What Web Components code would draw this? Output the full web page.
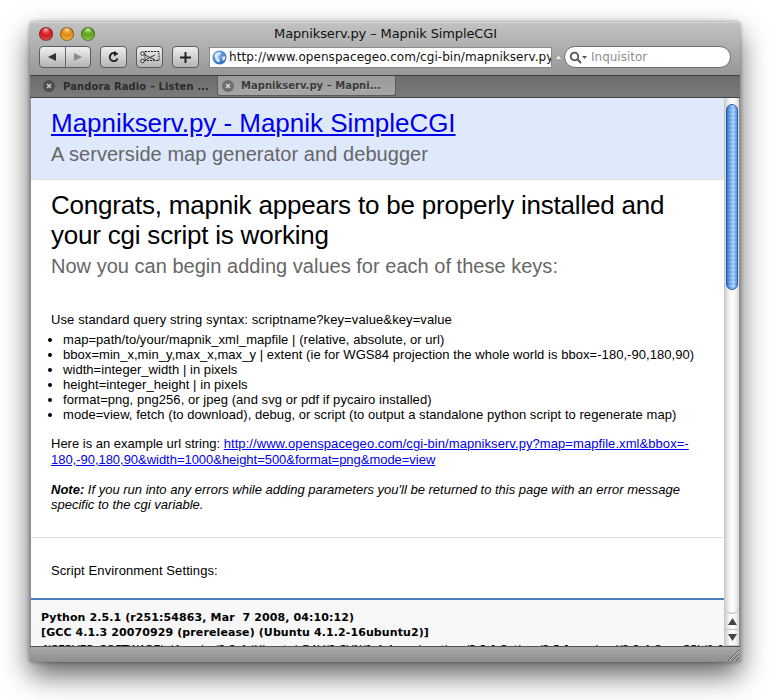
<!DOCTYPE html>
<html>
<head>
<meta charset="utf-8">
<title>Mapnikserv.py - Mapnik SimpleCGI</title>
<style>
    html, body { margin: 0; padding: 0; background: #fff; height: 700px; overflow: hidden; }
</style>
</head>
<body>
<browser-window>
    <browser-toolbar slot="chrome"></browser-toolbar>
    <tab-strip slot="chrome"></tab-strip>
    <map-page></map-page>
</browser-window>

<script>
class BrowserWindow extends HTMLElement {
    constructor() {
        super();
        this.attachShadow({mode: 'open'});
        this.shadowRoot.innerHTML = `
            <style>
                :host { display: block; padding: 22px 0 0 30px; }
                .window {
                    width: 710px;
                    height: 640px;
                    display: flex;
                    flex-direction: column;
                    border-radius: 4px 4px 0 0;
                    overflow: hidden;
                    box-shadow: 0 13px 28px rgba(0,0,0,.62), 0 0 4px rgba(0,0,0,.4);
                    background: #979797;
                }
                .body { flex: 1; min-height: 0; display: flex; padding: 0 1px; border-top: 1px solid #3f3f3f; background: #8e8e8e; }
                .foot {
                    height: 15px;
                    flex: none;
                    display: flex;
                    justify-content: flex-end;
                    border-top: 1px solid #555;
                    background: linear-gradient(#a8a8a8, #8e8e8e);
                }
                .grip { width: 15px; height: 15px; }
            </style>
            <div class="window">
                <slot name="chrome"></slot>
                <div class="body"><slot></slot></div>
                <div class="foot">
                    <svg class="grip" viewBox="0 0 15 15">
                        <path d="M3 14L14 3M7 14L14 7M11 14L14 11" stroke="#555" fill="none"/>
                        <path d="M4 14L14 4M8 14L14 8M12 14L14 12" stroke="#c4c4c4" fill="none"/>
                    </svg>
                </div>
            </div>
        `;
    }
}

class BrowserToolbar extends HTMLElement {
    constructor() {
        super();
        this.attachShadow({mode: 'open'});
        this.shadowRoot.innerHTML = `
            <style>
                :host {
                    display: block;
                    height: 54px;
                    box-sizing: border-box;
                    background: linear-gradient(#c2c2c2, #979797);
                    border-top: 1px solid #d8d8d8;
                    border-bottom: 1px solid #3f3f3f;
                }
                .title-row { height: 21px; display: flex; align-items: center; position: relative; padding-left: 9px; gap: 7px; }
                .title {
                    position: absolute; left: 1px; right: 0; top: 2px; text-align: center;
                    font: 13px/18px "DejaVu Sans", sans-serif; letter-spacing: -.12px; color: #111;
                }
                .light { width: 14px; height: 14px; border-radius: 50%; box-sizing: border-box; border: 1px solid rgba(0,0,0,.4); }
                .red { background: radial-gradient(circle at 50% 15%, #f7c4c4 0, #e8484c 22%, #d0181e 50%, #f06058 100%); }
                .yellow { background: radial-gradient(circle at 50% 15%, #fbe0b0 0, #eea030 25%, #e08a12 50%, #fbc860 100%); }
                .green { background: radial-gradient(circle at 50% 15%, #d0eeb0 0, #7cb83c 25%, #5ea020 50%, #a8dc60 100%); }
                .tools { height: 24px; margin-top: 1px; display: flex; align-items: center; padding-left: 9px; }
                .btn {
                    height: 22px; box-sizing: border-box; border: 1px solid #5c5c5c; border-radius: 4px;
                    background: linear-gradient(#f0f0f0, #b4b4b4); display: flex; align-items: center; justify-content: center;
                }
                .btn svg { display: block; }
                .seg { width: 52px; display: flex; margin-right: 9px; padding: 0; }
                .seg span { flex: 1; height: 100%; display: flex; align-items: center; justify-content: center; }
                .seg span + span { border-left: 1px solid #666; }
                .one { width: 27px; margin-right: 9px; }
                .url {
                    width: 343px; height: 21px; box-sizing: border-box; background: #fff;
                    margin-left: 1px; display: flex; align-items: center; overflow: hidden; padding-left: 2px; gap: 2px;
                    font: 12px/18px "DejaVu Sans", sans-serif; letter-spacing: .05px; color: #111; white-space: nowrap; border: 1px solid #8a8a8a;
                }
                .url svg { flex: none; }
                .mark { width: 12px; display: flex; justify-content: center; }
                .search {
                    width: 167px; height: 22px; box-sizing: border-box; background: #fff; border: 1px solid #6d6d6d; border-radius: 11px;
                    display: flex; align-items: center; padding-left: 4px; gap: 3px;
                    font: 12px "DejaVu Sans", sans-serif; color: #8e8e8e;
                }
            </style>
            <div class="title-row">
                <span class="light red"></span><span class="light yellow"></span><span class="light green"></span>
                <span class="title">Mapnikserv.py – Mapnik SimpleCGI</span>
            </div>
            <div class="tools">
                <div class="btn seg">
                    <span><svg width="10" height="10" viewBox="0 0 10 10"><path d="M9 1V9L1 5Z" fill="#333"/></svg></span>
                    <span><svg width="10" height="10" viewBox="0 0 10 10"><path d="M1 1V9L9 5Z" fill="#8c8c8c"/></svg></span>
                </div>
                <div class="btn one">
                    <svg width="12" height="12" viewBox="0 0 12 12"><path d="M9.500 7.500A4 4 0 1 1 7 2.300" fill="none" stroke="#222" stroke-width="2"/><path d="M6 0L10.500 2.700L6 5.500Z" fill="#222"/></svg>
                </div>
                <div class="btn one">
                    <svg width="20" height="14" viewBox="0 0 20 14">
                        <rect x="5" y="1.500" width="14" height="9" fill="none" stroke="#222" stroke-dasharray="2 1"/>
                        <path d="M3 4L15 10M3 11L15 5" stroke="#333" fill="none"/>
                        <circle cx="2.500" cy="3.500" r="1.800" fill="#ddd" stroke="#333"/><circle cx="2.500" cy="11" r="1.800" fill="#ddd" stroke="#333"/>
                    </svg>
                </div>
                <div class="btn one">
                    <svg width="11" height="11" viewBox="0 0 11 11"><path d="M5.500 0V11M0 5.500H11" stroke="#222" stroke-width="2"/></svg>
                </div>
                <div class="url">
                    <svg width="15" height="15" viewBox="0 0 15 15">
                        <defs><radialGradient id="globe" cx=".4" cy=".35" r=".75"><stop offset="0" stop-color="#8fc0f4"/><stop offset="1" stop-color="#1c5cb8"/></radialGradient></defs>
                        <circle cx="7.500" cy="7.500" r="7" fill="url(#globe)"/>
                        <path d="M3 4C5 2 8 1.500 9 3C9 5 6 5 6 7C6 9 8 9 8 11C7 13 5 12 4 10C3 8 2 6 3 4ZM10 7L13 6C14 8 13 10 11 11Z" fill="#dce8f6"/>
                    </svg>
                    <span>http://www.openspacegeo.com/cgi-bin/mapnikserv.py</span>
                </div>
                <div class="mark"><svg width="5" height="5" viewBox="0 0 5 5"><path d="M2.500 0.500L5 4H0Z" fill="#eee"/></svg></div>
                <div class="search">
                    <svg width="19" height="13" viewBox="0 0 19 13">
                        <circle cx="5.500" cy="5.500" r="3.800" fill="none" stroke="#555" stroke-width="1.800"/>
                        <path d="M8.500 8.500L12 12" stroke="#555" stroke-width="2"/>
                        <path d="M13 5H18L15.500 8Z" fill="#555"/>
                    </svg>
                    <span>Inquisitor</span>
                </div>
            </div>
        `;
    }
}

class TabStrip extends HTMLElement {
    constructor() {
        super();
        this.attachShadow({mode: 'open'});
        this.shadowRoot.innerHTML = `
            <style>
                :host {
                    display: flex;
                    height: 21px;
                    background: linear-gradient(#6c6c6c, #7b7b7b);
                    font: bold 10px "DejaVu Sans", sans-serif;
                    letter-spacing: .1px;
                    color: #2b2b2b;
                }
                .tab {
                    box-sizing: border-box;
                    display: flex; align-items: center; gap: 8px; padding-left: 13px;
                    white-space: nowrap; overflow: hidden; height: 20px;
                }
                .tab.first { width: 187px; }
                .tab.active {
                    width: 179px; padding-left: 4px; gap: 7px; color: #3a3a3a; letter-spacing: .02px;
                    background: linear-gradient(#9a9a9a, #a6a6a6);
                    border: 1px solid #5a5a5a; border-top: 0; border-radius: 0 0 3px 3px;
                    text-shadow: 0 1px 0 rgba(255,255,255,.25);
                }
                .x { width: 12px; height: 12px; flex: none; }
            </style>
            <div class="tab first">
                <svg class="x" viewBox="0 0 12 12"><circle cx="6" cy="6" r="6" fill="#4f4f4f"/><path d="M4 4L8 8M8 4L4 8" stroke="#c9c9c9" stroke-width="1.500"/></svg>
                <span>Pandora Radio – Listen ...</span>
            </div>
            <div class="tab active">
                <svg class="x" viewBox="0 0 12 12"><circle cx="6" cy="6" r="6" fill="#6e6e6e"/><path d="M4 4L8 8M8 4L4 8" stroke="#d6d6d6" stroke-width="1.500"/></svg>
                <span>Mapnikserv.py – Mapni...</span>
            </div>
        `;
    }
}

class MapPage extends HTMLElement {
    constructor() {
        super();
        this.attachShadow({mode: 'open'});
        this.shadowRoot.innerHTML = `
            <style>
                :host { display: flex; flex: 1; min-width: 0; background: #fff; font: 13px/15px "Liberation Sans", Arial, sans-serif; color: #000; overflow: hidden; }
                .main { flex: 1; min-width: 0; display: flex; flex-direction: column; }
                header { height: 82px; flex: none; box-sizing: border-box; padding: 9px 20px 0; background: #dfe9fc; border-bottom: 1px solid #d8dde8; }
                h1 { margin: 0; font-size: 26px; line-height: 33px; font-weight: normal; letter-spacing: -.03px; }
                a { color: #0000ee; text-decoration: underline; }
                .sub { margin-top: 1px; font-size: 20px; line-height: 26px; color: #666; letter-spacing: .06px; }
                .content { height: 358px; flex: none; box-sizing: border-box; padding: 10px 20px 0; border-bottom: 1px solid #ddd; }
                h2 { margin: 0; font-size: 26px; line-height: 30px; font-weight: normal; letter-spacing: -.21px; }
                h3 { margin: 3px 0 0; font-size: 20px; line-height: 26px; font-weight: normal; color: #666; letter-spacing: .02px; }
                p { margin: 0; }
                .syntax { margin-top: 33px; letter-spacing: .1px; }
                ul { margin: 5px 0 0; padding: 0 0 0 12px; letter-spacing: .05px; }
                .example { margin-top: 14px; line-height: 16px; }
                .wide { letter-spacing: .07px; }
                .tight { letter-spacing: -.03px; }
                .note { margin-top: 14px; }
                .env { height: 60px; flex: none; box-sizing: border-box; padding-top: 25px; padding-left: 20px; letter-spacing: .1px; }
                pre {
                    flex: 1; min-height: 0; margin: 0; overflow: hidden; box-sizing: border-box;
                    background: #f7f7f7; border-top: 2px solid #4a7fb5; padding: 10px 10px 0;
                    font: 11px/15px "DejaVu Sans", sans-serif; white-space: pre;
                }
                pre b { display: block; letter-spacing: .1px; }
                pre span { display: block; margin-top: 2px; }
                .scroll {
                    width: 15px; flex: none;
                    display: flex; flex-direction: column;
                    background: linear-gradient(90deg, #d2d2d2, #f8f8f8 35%, #fff 60%, #d8d8d8);
                    border-left: 1px solid #c8c8c8; box-sizing: border-box;
                }
                .track { flex: 1; padding: 6px 1px 0 1px; border-radius: 0 0 7px 7px; border-bottom: 1px solid #b5b5b5; }
                .thumb {
                    height: 186px; border-radius: 7px; box-sizing: border-box; border: 1px solid #2a5aa8;
                    background:
                        repeating-linear-gradient(rgba(255,255,255,.1) 0 2px, rgba(0,0,0,.03) 2px 4px),
                        linear-gradient(90deg, #2c6ccc, #6aa8f0 30%, #a4d0fb 65%, #4a90e6);
                }
                .arrow { height: 16px; flex: none; display: flex; align-items: center; justify-content: center; border-bottom: 1px solid #c4c4c4; box-sizing: border-box; padding-bottom: 1px; }
            </style>
            <div class="main">
                <header>
                    <h1><a href="#">Mapnikserv.py - Mapnik SimpleCGI</a></h1>
                    <div class="sub">A serverside map generator and debugger</div>
                </header>
                <div class="content">
                    <h2>Congrats, mapnik appears to be properly installed and your cgi script is working</h2>
                    <h3>Now you can begin adding values for each of these keys:</h3>
                    <p class="syntax">Use standard query string syntax: scriptname?key=value&amp;key=value</p>
                    <ul>
                        <li>map=path/to/your/mapnik_xml_mapfile | (relative, absolute, or url)</li>
                        <li>bbox=min_x,min_y,max_x,max_y | extent (ie for WGS84 projection the whole world is bbox=-180,-90,180,90)</li>
                        <li>width=integer_width | in pixels</li>
                        <li>height=integer_height | in pixels</li>
                        <li>format=png, png256, or jpeg (and svg or pdf if pycairo installed)</li>
                        <li>mode=view, fetch (to download), debug, or script (to output a standalone python script to regenerate map)</li>
                    </ul>
                    <p class="example">Here is an example url string: <a href="#"><span class="wide">http://www.openspacegeo.com/cgi-bin/mapnikserv.py?map=mapfile.xml&amp;bbox=-</span><wbr><span class="tight">180,-90,180,90&amp;width=1000&amp;height=500&amp;format=png&amp;mode=view</span></a></p>
                    <p class="note"><em><strong>Note:</strong> If you run into any errors while adding parameters you'll be returned to this page with an error message specific to the cgi variable.</em></p>
                </div>
                <div class="env">Script Environment Settings:</div>
                <pre><b>Python 2.5.1 (r251:54863, Mar  7 2008, 04:10:12)</b><b>[GCC 4.1.3 20070929 (prerelease) (Ubuntu 4.1.2-16ubuntu2)]</b><span>{'SERVER_SOFTWARE': 'Apache/2.2.4 (Ubuntu) DAV/2 SVN/1.4.4 mod_python/3.3.1 Python/2.5.1 mod_ssl/2.2.4 OpenSSL/0.9.8e'}</span></pre>
            </div>
            <div class="scroll">
                <div class="track"><div class="thumb"></div></div>
                <div class="arrow"><svg width="9" height="7" viewBox="0 0 9 7"><path d="M4.500 0L9 7H0Z" fill="#444"/></svg></div>
                <div class="arrow"><svg width="9" height="7" viewBox="0 0 9 7"><path d="M4.500 7L9 0H0Z" fill="#444"/></svg></div>
            </div>
        `;
    }
}

customElements.define('browser-window', BrowserWindow);
customElements.define('browser-toolbar', BrowserToolbar);
customElements.define('tab-strip', TabStrip);
customElements.define('map-page', MapPage);
</script>
</body>
</html>
